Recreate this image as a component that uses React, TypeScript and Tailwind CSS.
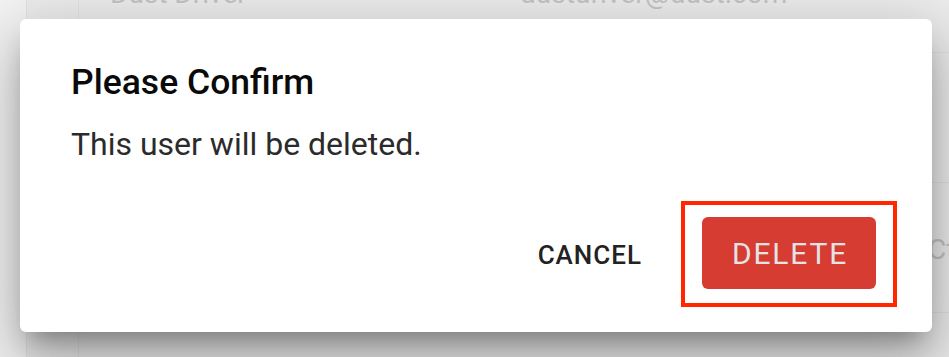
import React from 'react';

const rows = [
  { name: 'Dust Driver', email: 'dustdriver@dust.com', extra: '' },
  { name: '', email: '', extra: '' },
  { name: '', email: '', extra: 'Ctrl' },
  { name: '', email: '', extra: '' },
];

const App = () => {
  return (
    <div className="relative w-[949px] h-[357px] overflow-hidden bg-[#ececec] font-['Roboto',_'Liberation_Sans',_sans-serif]">
      {/* page underneath the dialog */}
      <div className="flex h-full">
        <div className="w-[27px] shrink-0 bg-[#f3f3f3] border-r border-[#e3e3e3]" />
        <div className="w-[52px] shrink-0 border-r border-[#e3e3e3]" />
        <div className="flex-1 flex flex-col -mt-[77px]">
          {rows.map((r, i) => (
            <div
              key={i}
              className={`flex items-center h-[130px] shrink-0 border-b border-[#e1e1e1] text-[28px] text-[#c4c4c4] ${i === 0 ? 'pt-[13px]' : 'pt-[4px]'}`}
            >
              <div className="w-[441px] pl-[31px]">{r.name}</div>
              <div className="w-[408px]">{r.email}</div>
              <div className="flex-1 whitespace-nowrap">{r.extra}</div>
            </div>
          ))}
        </div>
      </div>

      {/* dialog */}
      <div className="absolute left-[20px] top-[19px] w-[912px] h-[313px] bg-white rounded-[6px] shadow-[0_16px_22px_-10px_rgba(0,0,0,0.3),0_34px_54px_4px_rgba(0,0,0,0.18),0_12px_64px_12px_rgba(0,0,0,0.12)] flex flex-col">
        <div className="pl-[51px] pt-[43px] text-[35.5px] leading-[40px] font-medium text-[#0a0a0a]">Please Confirm</div>
        <div className="pl-[51px] mt-[22px] text-[32px] leading-[40px] text-[#2b2b2b]">This user will be deleted.</div>
        <div className="mt-auto flex items-center justify-end pr-[35px] pb-[25px]">
          <button className="mr-[23px] mt-[2px] px-[16px] h-[48px] text-[26px] font-medium tracking-[1px] text-[#222] uppercase">Cancel</button>
          <div className="border-4 border-[#ff2600] px-[17px] pt-[12px] pb-[14px]">
            <button className="w-[174px] h-[72px] pl-[2px] rounded-[6px] bg-[#d73c33] text-[30px] tracking-[1.8px] text-[#e4e4e4] uppercase">Delete</button>
          </div>
        </div>
      </div>
    </div>
  );
};

export default App;
